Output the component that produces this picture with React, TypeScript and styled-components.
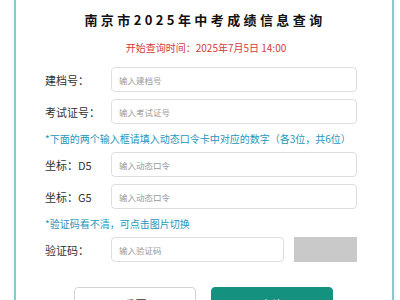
import React from "react";
import styled, { createGlobalStyle } from "styled-components";

const GlobalStyle = createGlobalStyle`
  body {
    margin: 0;
    background: #fff;
    font-family: "Noto Sans CJK SC", "Noto Sans", sans-serif;
    color: #333;
  }
`;

const fields = [
  { label: "建档号：", placeholder: "输入建档号" },
  { label: "考试证号：", placeholder: "输入考试证号" },
];

const codes = [
  { label: "坐标：D5", placeholder: "输入动态口令" },
  { label: "坐标：G5", placeholder: "输入动态口令" },
];

const App = () => {
  return (
    <Page>
      <GlobalStyle />
      <Card>
        <Title>南京市2025年中考成绩信息查询</Title>
        <StartTime>开始查询时间：2025年7月5日 14:00</StartTime>
        <Form>
          {fields.map((f) => (
            <Row key={f.label}>
              <Label>{f.label}</Label>
              <Input type="text" placeholder={f.placeholder} />
            </Row>
          ))}
          <Hint>*下面的两个输入框请填入动态口令卡中对应的数字（各3位，共6位）</Hint>
          {codes.map((f) => (
            <Row key={f.label}>
              <Label>{f.label}</Label>
              <Input type="text" placeholder={f.placeholder} />
            </Row>
          ))}
          <Hint>*验证码看不清，可点击图片切换</Hint>
          <Row>
            <Label>验证码：</Label>
            <CaptchaInput type="text" placeholder="输入验证码" />
            <Captcha />
          </Row>
          <Buttons>
            <ResetButton>重置</ResetButton>
            <SubmitButton>查询</SubmitButton>
          </Buttons>
        </Form>
      </Card>
    </Page>
  );
};

export default App;

const Page = styled.div`
  width: 400px;
  height: 300px;
  overflow: hidden;
`;

const Card = styled.div`
  margin-left: 14px;
  width: 380px;
  box-sizing: border-box;
  border: 2px solid #86cacb;
  border-top: 0;
  box-shadow: 0 0 3px rgba(120, 200, 200, 0.35);
  padding: 10px 35px 20px 29px;
`;

const Title = styled.div`
  text-align: center;
  font-size: 13px;
  line-height: 20px;
  font-weight: bold;
  letter-spacing: 3.4px;
  color: #111;
  padding-left: 8px;
`;

const StartTime = styled.div`
  margin-top: 10px;
  text-align: center;
  font-size: 10px;
  line-height: 16px;
  color: #d13b3b;
  padding-left: 10px;
`;

const Form = styled.div`
  margin-top: 11px;
  display: flex;
  flex-direction: column;
`;

const Row = styled.div`
  display: flex;
  align-items: center;
  margin-bottom: 7px;
`;

const Label = styled.div`
  width: 66px;
  flex-shrink: 0;
  font-size: 11px;
  color: #333;
`;

const Input = styled.input`
  flex: 1;
  height: 25px;
  box-sizing: border-box;
  border: 1px solid #dedede;
  border-radius: 4px;
  padding: 0 7px;
  font-family: "Noto Sans CJK SC", "Noto Sans", sans-serif;
  font-size: 8.5px;
  outline: none;

  &::placeholder {
    color: #999;
  }
`;

const CaptchaInput = styled(Input)`
  flex: 0 0 173px;
`;

const Captcha = styled.div`
  width: 63px;
  height: 25px;
  margin-left: 10px;
  background: #c9c9c9;
`;

const Hint = styled.div`
  margin: 0 0 5px;
  font-size: 10px;
  line-height: 16px;
  white-space: nowrap;
  color: #2596bb;
`;

const Buttons = styled.div`
  display: flex;
  gap: 15px;
  margin-top: 18px;
  padding-left: 29px;
`;

const ResetButton = styled.button`
  width: 122px;
  height: 34px;
  background: #fff;
  border: 1px solid #d4d4d4;
  border-radius: 4px;
  font-family: "Noto Sans CJK SC", "Noto Sans", sans-serif;
  font-size: 12px;
  color: #333;
`;

const SubmitButton = styled(ResetButton)`
  background: #14917f;
  border-color: #14917f;
  color: #fff;
`;
